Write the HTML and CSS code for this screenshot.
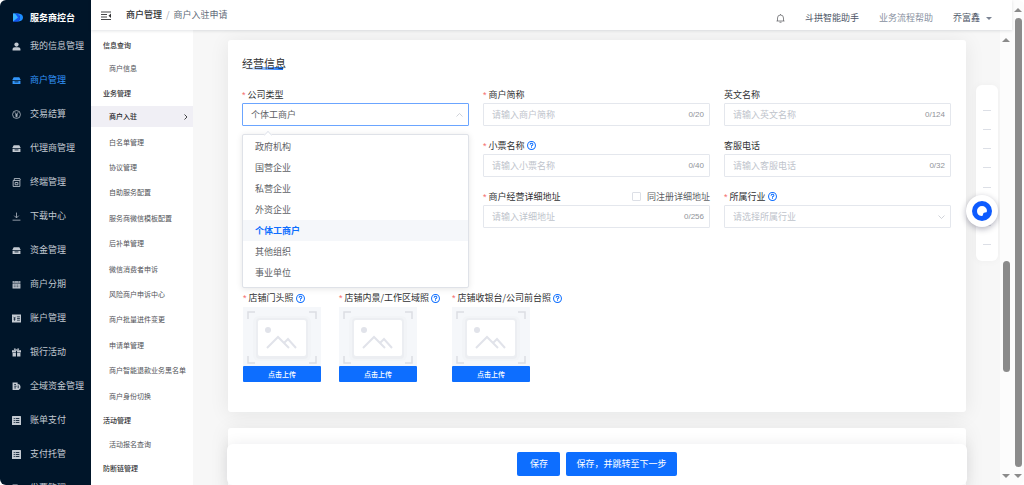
FILE: index.html
```html
<!DOCTYPE html>
<html lang="zh-CN">
<head>
  <meta charset="UTF-8">
  <meta name="viewport" content="width=device-width, initial-scale=1.0">
  <title>服务商控台</title>
  <link rel="stylesheet" href="styles.css">
</head>
<body>
  <!-- shared icons -->
  <svg class="sprite" aria-hidden="true">
    <symbol id="i-user" viewBox="0 0 16 16"><circle cx="8" cy="4.5" r="3.8"/><path d="M1 15v-2.500Q1 9.500 5 9.500h6q4 0 4 3V15z"/></symbol>
    <symbol id="i-shop" viewBox="0 0 16 16"><path d="M3 2h10l2.500 5h-15zM1 8.500h14V14H1z"/><path d="M4.500 10.500h7" stroke="#001529" stroke-width="1.500"/></symbol>
    <symbol id="i-yen" viewBox="0 0 16 16"><g fill="none" stroke="currentColor" stroke-width="1.300"><circle cx="8" cy="8" r="7"/><path d="M5 4l3 4 3-4M8 8v5M5.500 8.500h5M5.500 10.700h5"/></g></symbol>
    <symbol id="i-pos" viewBox="0 0 16 16"><g fill="none" stroke="currentColor" stroke-width="1.500"><path d="M2 4.500h12V15H2zM4 4V1h10l1 3M5.500 8h5v4h-5z"/></g></symbol>
    <symbol id="i-down" viewBox="0 0 16 16"><path d="M8 1v9M4 6.500l4 4 4-4M1 14.500h14" fill="none" stroke="currentColor" stroke-width="1.300"/></symbol>
    <symbol id="i-cal" viewBox="0 0 16 16"><path d="M1 2h14v3H1zM1 6h14v9H1z"/><path d="M4.500 0v4M11.500 0v4M3 9h10M3 12h10" stroke="#001529" stroke-width="1.200" stroke-dasharray="2 1"/></symbol>
    <symbol id="i-account" viewBox="0 0 16 16"><path d="M0 1h16v14H0z"/><path d="M2.500 5l2 2 2-2M4.500 7v5M2.500 9h4M9 5h5M9 8h5M9 11h5" fill="none" stroke="#001529" stroke-width="1.300"/></symbol>
    <symbol id="i-gift" viewBox="0 0 16 16"><path d="M0 4h7v4H0zM9 4h7v4H9zM1 9h6v6H1zM9 9h6v6H9z"/><path d="M8 4Q3 4 4 1.500 6 0 8 4q2-4 4-2.500Q13 4 8 4z" fill="none" stroke="currentColor" stroke-width="1.500"/></symbol>
    <symbol id="i-fund" viewBox="0 0 16 16"><path d="M1 1h9v3h3l2 3v4l-3 3H1z"/><path d="M4 4.500h3M4 7.500h4M4 10.500h3M11 6v5" stroke="#001529" stroke-width="1.500"/></symbol>
    <symbol id="i-list" viewBox="0 0 16 16"><rect x="0" y="0" width="16" height="16" rx="1"/><path d="M3 4.500h2M6.500 4.500H13M3 8h2M6.500 8H13M3 11.500h2M6.500 11.500H13" stroke="#001529" stroke-width="1.500"/></symbol>
    <symbol id="i-help" viewBox="0 0 16 16"><g fill="none" stroke="#0d6eff" stroke-width="1.800"><circle cx="8" cy="8" r="7"/><path d="M5.500 6.500Q5.500 4 8 4t2.500 2.300Q10.500 8 8 8.500V10M8 11v1.600"/></g></symbol>
    <symbol id="i-picture" viewBox="0 0 78 59">
      <path d="M5 12V5h7M66 5h7v7M73 49v7h-7M12 56H5v-7" fill="none" stroke="#dcdee3" stroke-width="1.500"/>
      <rect x="10" y="9" width="58" height="45" rx="6" fill="#f2f4f7"/>
      <rect x="13" y="11" width="52" height="41" rx="4" fill="#eceef2"/>
      <rect x="15" y="13" width="48" height="36" rx="2" fill="#fff"/>
      <circle cx="25" cy="23" r="3" fill="#e1e3ea"/>
      <path d="M24 41l11-11 11 11M41 36l4-4 8 9" fill="none" stroke="#e1e3ea" stroke-width="2"/>
    </symbol>
  </svg>

  <aside class="sidebar">
    <div class="brand">
      <svg viewBox="0 0 20 18"><path d="M0 1h9v16H0z" fill="#1456f0"/><path d="M4 1h7q9 1 9 8t-9 8H8q6-3 6-8T4 1z" fill="#1c8cff"/><path d="M4 1q10 1 10 8t-6 8H0L9 9z" fill="#1456f0"/><path d="M0 1h4l6 8-10 8z" fill="#39b5ff"/></svg>
      服务商控台
    </div>
    <nav class="main-nav">
      <a href="#"><svg><use href="#i-user"/></svg>我的信息管理</a>
      <a href="#" class="active"><svg><use href="#i-shop"/></svg>商户管理</a>
      <a href="#"><svg><use href="#i-yen"/></svg>交易结算</a>
      <a href="#"><svg><use href="#i-shop"/></svg>代理商管理</a>
      <a href="#"><svg><use href="#i-pos"/></svg>终端管理</a>
      <a href="#"><svg><use href="#i-down"/></svg>下载中心</a>
      <a href="#"><svg><use href="#i-shop"/></svg>资金管理</a>
      <a href="#"><svg><use href="#i-cal"/></svg>商户分期</a>
      <a href="#"><svg><use href="#i-account"/></svg>账户管理</a>
      <a href="#"><svg><use href="#i-gift"/></svg>银行活动</a>
      <a href="#"><svg><use href="#i-fund"/></svg>全域资金管理</a>
      <a href="#"><svg><use href="#i-list"/></svg>账单支付</a>
      <a href="#"><svg><use href="#i-list"/></svg>支付托管</a>
      <a href="#"><svg><use href="#i-fund"/></svg>发票管理</a>
    </nav>
  </aside>

  <div class="page">
    <header class="topbar">
      <svg class="fold" viewBox="0 0 20 18"><path d="M0 2h20M0 7h12M0 12h12M0 17h20" stroke="#303133" stroke-width="1.800"/><path d="M20 5v9l-5-4.500z" fill="#303133"/></svg>
      <div class="crumbs"><b>商户管理</b><i>/</i><span>商户入驻申请</span></div>
      <div class="tools">
        <svg class="bell" viewBox="0 0 18 18"><path d="M3 14V8q0-6 6-6t6 6v6M1 14h16M7 16.500h4M9 0v2" fill="none" stroke="#606266" stroke-width="1.500"/></svg>
        <a href="#">斗拱智能助手</a>
        <a href="#" class="muted">业务流程帮助</a>
        <a href="#" class="account">乔富鑫<span class="caret"></span></a>
      </div>
    </header>

    <div class="body">
      <nav class="sub-nav">
        <h4>信息查询</h4>
        <a href="#">商户信息</a>
        <h4>业务管理</h4>
        <a href="#" class="active">商户入驻<svg viewBox="0 0 8 12"><path d="M1 1l5 5-5 5" fill="none" stroke="#303133" stroke-width="1.800"/></svg></a>
        <a href="#">白名单管理</a>
        <a href="#">协议管理</a>
        <a href="#">自助服务配置</a>
        <a href="#">服务商微信模板配置</a>
        <a href="#">后补单管理</a>
        <a href="#">微信消费者申诉</a>
        <a href="#">风险商户申诉中心</a>
        <a href="#">商户批量进件变更</a>
        <a href="#">申请单管理</a>
        <a href="#">商户智能退款业务黑名单</a>
        <a href="#">商户身份切换</a>
        <h4>活动管理</h4>
        <a href="#">活动报名查询</a>
        <h4>防断链管理</h4>
      </nav>

      <main class="content">
        <section class="card">
          <h2>经营信息</h2>
          <form class="form-grid">
            <div class="field">
              <div class="label"><label class="required" for="type">公司类型</label></div>
              <div class="control">
                <select id="type" class="open"><option>个体工商户</option></select>
                <svg class="arrow" viewBox="0 0 14 8"><path d="M1 7l6-6 6 6" fill="none" stroke="#c0c4cc" stroke-width="1.500"/></svg>
                <ul class="options">
                  <li>政府机构</li>
                  <li>国营企业</li>
                  <li>私营企业</li>
                  <li>外资企业</li>
                  <li class="selected">个体工商户</li>
                  <li>其他组织</li>
                  <li>事业单位</li>
                </ul>
              </div>
            </div>
            <div class="field">
              <div class="label"><label class="required" for="short">商户简称</label></div>
              <div class="control"><input type="text" id="short" placeholder="请输入商户简称"><span class="count">0/20</span></div>
            </div>
            <div class="field">
              <div class="label"><label for="english">英文名称</label></div>
              <div class="control"><input type="text" id="english" placeholder="请输入英文名称"><span class="count">0/124</span></div>
            </div>
            <div class="field second">
              <div class="label"><label class="required" for="receipt">小票名称</label><svg class="help"><use href="#i-help"/></svg></div>
              <div class="control"><input type="text" id="receipt" placeholder="请输入小票名称"><span class="count">0/40</span></div>
            </div>
            <div class="field">
              <div class="label"><label for="phone">客服电话</label></div>
              <div class="control"><input type="text" id="phone" placeholder="请输入客服电话"><span class="count">0/32</span></div>
            </div>
            <div class="field second">
              <div class="label">
                <label class="required" for="address">商户经营详细地址</label>
                <label class="same"><input type="checkbox">同注册详细地址</label>
              </div>
              <div class="control"><input type="text" id="address" placeholder="请输入详细地址"><span class="count">0/256</span></div>
            </div>
            <div class="field">
              <div class="label"><label class="required" for="industry">所属行业</label><svg class="help"><use href="#i-help"/></svg></div>
              <div class="control">
                <select id="industry" class="empty"><option>请选择所属行业</option></select>
                <svg class="arrow" viewBox="0 0 14 8"><path d="M1 1l6 6 6-6" fill="none" stroke="#c0c4cc" stroke-width="1.500"/></svg>
              </div>
            </div>
          </form>

          <div class="uploads">
            <div class="upload">
              <div class="label"><span class="required">店铺门头照</span><svg class="help"><use href="#i-help"/></svg></div>
              <svg class="preview"><use href="#i-picture"/></svg>
              <button type="button">点击上传</button>
            </div>
            <div class="upload">
              <div class="label"><span class="required">店铺内景/工作区域照</span><svg class="help"><use href="#i-help"/></svg></div>
              <svg class="preview"><use href="#i-picture"/></svg>
              <button type="button">点击上传</button>
            </div>
            <div class="upload">
              <div class="label"><span class="required">店铺收银台/公司前台照</span><svg class="help"><use href="#i-help"/></svg></div>
              <svg class="preview"><use href="#i-picture"/></svg>
              <button type="button">点击上传</button>
            </div>
          </div>
        </section>

        <section class="card next"></section>

        <footer class="actions">
          <button type="button">保存</button>
          <button type="button">保存，并跳转至下一步</button>
        </footer>

        <div class="anchor-rail">
          <i></i><i></i><i></i><i></i><i></i><i></i><i></i><i></i>
          <button type="button" class="assistant" aria-label="智能助手">
            <svg viewBox="0 0 20 20"><circle cx="10" cy="10" r="10" fill="#0d5bff"/><path d="M10 5a5 5 0 0 0-5 5q0 4.500 4.500 5 1.500 0 1.500-1.500 0-2 2-2 2 0 2-1.500a5 5 0 0 0-5-5z" fill="#fff"/></svg>
          </button>
        </div>
      </main>

      <div class="scrollbar inner"><span class="up"></span><span class="thumb"></span><span class="down"></span></div>
    </div>
  </div>

  <div class="scrollbar outer"><span class="up"></span><span class="thumb"></span><span class="down"></span></div>
</body>
</html>
```
FILE: styles.css
```css
* {
  box-sizing: border-box;
}
body {
  margin: 0;
  height: 100vh;
  display: flex;
  overflow: hidden;
  background: #fff;
  color: #303133;
  font-family: "Noto Sans CJK SC", sans-serif;
  font-size: 9px;
  line-height: 12px;
}
a {
  color: inherit;
  text-decoration: none;
}
button, input, select {
  font: inherit;
  color: inherit;
}
button {
  border: none;
  border-radius: 2px;
  padding: 0;
  background: #0d6eff;
  color: #fff;
  cursor: pointer;
}
.sprite {
  position: absolute;
  width: 0;
  height: 0;
}

/* left menu */
.sidebar {
  flex: 0 0 91px;
  overflow: hidden;
  background: #001529;
  border-radius: 6px 0 0 6px;
  color: #c3cad2;
  white-space: nowrap;
}
.brand {
  display: flex;
  align-items: center;
  gap: 7px;
  height: 29px;
  padding: 6px 0 0 13px;
  color: #fff;
  font-weight: bold;
}
.brand svg {
  width: 10px;
  height: 9px;
}
.main-nav a {
  display: flex;
  align-items: center;
  gap: 9px;
  height: 34px;
  padding-left: 12px;
}
.main-nav svg {
  width: 9px;
  height: 9px;
  fill: currentColor;
}
.main-nav .active {
  color: #3296fa;
}

.page {
  flex: 1;
  min-width: 0;
  display: flex;
  flex-direction: column;
}

/* top bar */
.topbar {
  z-index: 2;
  flex: 0 0 30px;
  display: flex;
  align-items: center;
  padding: 0 20px 0 10px;
  background: #fff;
  box-shadow: 0 1px 3px rgba(0, 21, 41, 0.12);
}
.fold {
  width: 10px;
  height: 9px;
}
.crumbs {
  display: flex;
  gap: 4px;
  margin-left: 15px;
  color: #606a78;
}
.crumbs b {
  color: #303133;
  font-weight: 500;
}
.crumbs i {
  color: #a0a6b0;
  font-style: normal;
}
.tools {
  display: flex;
  align-items: center;
  gap: 20px;
  margin-left: auto;
  padding-top: 6px;
  color: #4c5566;
}
.bell {
  width: 9px;
  height: 9px;
}
.muted {
  color: #8790a0;
}
.account {
  display: flex;
  align-items: center;
  gap: 6px;
}
.caret {
  border: 3px solid transparent;
  border-top: 3px solid #7b8494;
  border-bottom: none;
}

.body {
  flex: 1;
  min-height: 0;
  display: flex;
}

/* second level menu */
.sub-nav {
  flex: 0 0 102px;
  display: flex;
  flex-direction: column;
  justify-content: space-between;
  padding: 6px 0 8px;
  overflow: hidden;
  background: #fff;
  color: #505257;
  font-size: 7px;
  white-space: nowrap;
}
.sub-nav h4 {
  margin: 0;
  padding-left: 12px;
  color: #303133;
  font-size: 7px;
  font-weight: 500;
  line-height: 18px;
}
.sub-nav a {
  display: flex;
  align-items: center;
  justify-content: space-between;
  padding: 0 5px 0 18px;
  line-height: 21px;
}
.sub-nav .active {
  background: #f0eff5;
  color: #202124;
  font-weight: 500;
}
.sub-nav svg {
  width: 4px;
  height: 6px;
}

/* content */
.content {
  position: relative;
  flex: 1;
  min-width: 0;
  overflow: hidden;
  padding: 10px 34px 0 35px;
  background: #f7f7f7;
}
.card {
  padding: 14px 15px 30px 14px;
  margin-bottom: 16px;
  background: #fff;
  border-radius: 3px;
  box-shadow: 0 2px 20px rgba(0, 21, 21, 0.08);
}
.card.next {
  height: 80px;
}
.card h2 {
  width: max-content;
  margin: 0 0 14px;
  background: linear-gradient(90deg, #fff, #0d6eff) 4px 13px / 37px 3px no-repeat;
  font-size: 11px;
  font-weight: 400;
  line-height: 18px;
}
.form-grid {
  display: grid;
  grid-template-columns: repeat(3, 1fr);
  gap: 11px 14px;
}
.second {
  grid-column: 2;
}
.label {
  display: flex;
  align-items: center;
  height: 17px;
  white-space: nowrap;
}
.required::before {
  content: "*";
  margin-right: 2px;
  color: #f56c6c;
  font-family: "Liberation Sans", sans-serif;
}
.help {
  flex: none;
  width: 9px;
  height: 9px;
  margin-left: 2px;
}
.same {
  display: flex;
  align-items: center;
  gap: 6px;
  margin-left: auto;
  color: #606266;
}
.same input {
  appearance: none;
  width: 9px;
  height: 9px;
  margin: 0;
  border: 1px solid #dcdfe6;
  border-radius: 1px;
}
.control {
  position: relative;
  display: flex;
  align-items: center;
  height: 23px;
  padding-right: 5px;
  border: 1px solid #e4e7ed;
  border-radius: 1px;
}
.control:has(.open) {
  border-color: #6ba5ff;
}
.control > input, .control > select {
  flex: 1;
  min-width: 0;
  height: 21px;
  padding: 0 8px;
  border: none;
  outline: none;
  background: none;
  appearance: none;
}
.control > select {
  color: #606266;
}
.control > .empty, .control > input::placeholder {
  color: #c0c4cc;
}
.count {
  color: #909399;
  font-family: "Liberation Sans", sans-serif;
  font-size: 8px;
}
.arrow {
  width: 7px;
  height: 4px;
}

/* opened list lies over the form */
.options {
  position: absolute;
  z-index: 1;
  top: 30px;
  left: -1px;
  right: -1px;
  margin: 0;
  padding: 1px 0 4px;
  list-style: none;
  background: #fff;
  border: 1px solid #dfe2e8;
  border-radius: 2px;
  box-shadow: 0 1px 6px rgba(0, 0, 0, 0.1);
  color: #606266;
}
.options::before {
  content: "";
  position: absolute;
  top: -3px;
  left: 22px;
  width: 5px;
  height: 5px;
  background: #fff;
  border: 1px solid #e4e7ed;
  border-width: 1px 0 0 1px;
  transform: rotate(45deg);
}
.options li {
  padding-left: 12px;
  line-height: 21px;
}
.options .selected {
  background: #f5f7fa;
  color: #0d6eff;
  font-weight: bold;
}

.uploads {
  display: grid;
  grid-template-columns: 78px 95px 78px;
  gap: 18px;
  margin-top: 61px;
  padding-left: 1px;
}
.upload {
  width: 78px;
}
.upload .label {
  height: 18px;
}
.preview {
  display: block;
  width: 78px;
  height: 59px;
  background: #f5f7fa;
}
.upload button {
  display: block;
  width: 100%;
  height: 16px;
  border-radius: 1px;
  font-size: 7px;
  font-weight: 500;
}

/* save bar stays at the bottom over the cards */
.actions {
  position: absolute;
  left: 34px;
  right: 33px;
  bottom: 0;
  display: flex;
  justify-content: center;
  gap: 6px;
  padding: 8px 0 9px;
  background: #fff;
  border-radius: 6px;
  box-shadow: 0 0 14px rgba(0, 21, 41, 0.08);
}
.actions button {
  min-width: 43px;
  height: 24px;
  padding: 0 10px;
}

.anchor-rail {
  position: absolute;
  top: 55px;
  right: 2px;
  display: flex;
  flex-direction: column;
  align-items: center;
  justify-content: space-between;
  width: 22px;
  height: 176px;
  padding: 25px 0 16px;
  background: #fff;
  border-radius: 6px;
  box-shadow: 0 0 8px rgba(0, 0, 0, 0.04);
}
.anchor-rail i {
  width: 8px;
  height: 1px;
  background: #dcdfe6;
}
.assistant {
  position: absolute;
  top: 110px;
  right: 0;
  display: flex;
  align-items: center;
  justify-content: center;
  width: 32px;
  height: 32px;
  background: #fff;
  border-radius: 50%;
  box-shadow: 0 2px 6px rgba(0, 0, 40, 0.3);
}
.assistant svg {
  width: 20px;
  height: 20px;
}

/* scrollbars */
.scrollbar {
  flex: 0 0 12px;
  display: flex;
  flex-direction: column;
  align-items: center;
  padding: 8px 0 7px;
  background: #fcfcfc;
}
.up, .down {
  border: 4px solid transparent;
}
.up {
  border-top: none;
  border-bottom: 4px solid #8b8b8b;
}
.down {
  border-bottom: none;
  border-top: 4px solid #8b8b8b;
}
.thumb {
  width: 7px;
  border-radius: 4px;
  background: #8b8b8b;
}
.outer {
  border-radius: 0 6px 6px 0;
}
.outer .thumb {
  flex: 1;
  margin: 6px 0 7px;
}
.inner .thumb {
  height: 23vh;
  margin: auto 0 21vh;
}
```
